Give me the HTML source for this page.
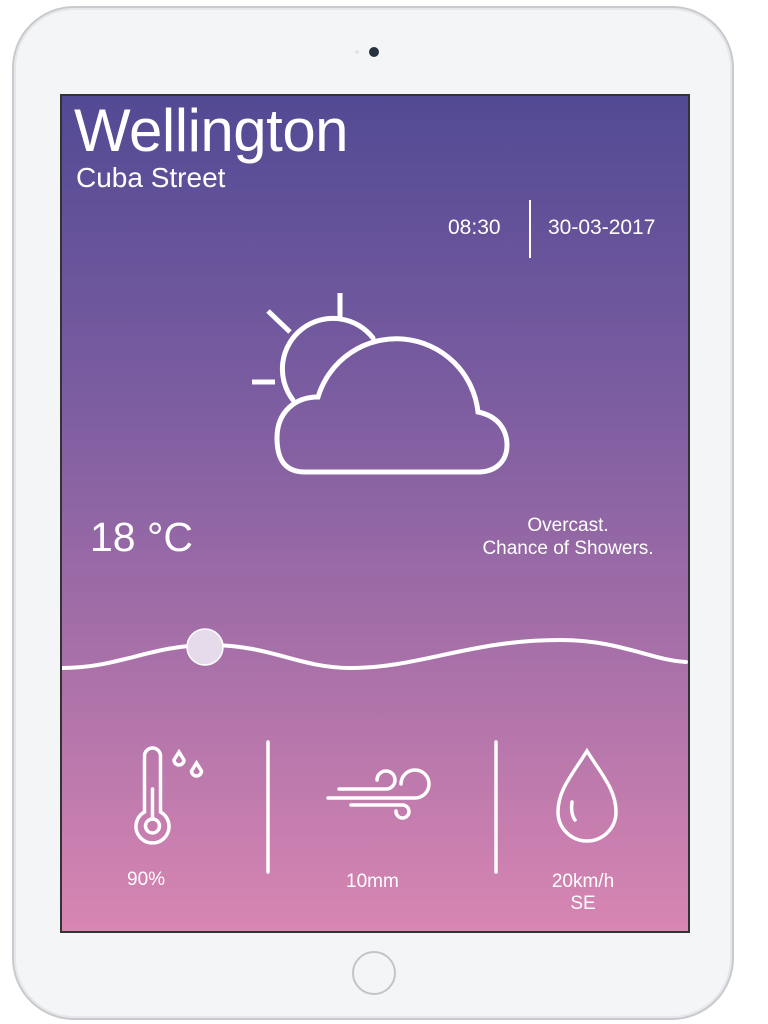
<!DOCTYPE html>
<html><head><style>
html,body{margin:0;padding:0;background:#fff;width:768px;height:1024px;overflow:hidden;font-family:"Liberation Sans",sans-serif;}
.dev{position:absolute;left:12px;top:6px;width:722px;height:1014px;border-radius:62px;background:#f4f5f7;border:2px solid #c9cacd;box-sizing:border-box;box-shadow:inset 0 0 0 2px #e6e7ea;}
.scr{position:absolute;left:60px;top:94px;width:630px;height:839px;background:linear-gradient(#524a94 0%,#7a5ca0 35%,#a56fa8 65%,#d886b2 100%);border:2px solid #333;box-sizing:border-box;color:#fff;overflow:hidden;}
.t{position:absolute;white-space:nowrap;}
</style></head><body>
<div class="dev"></div>
<div style="position:absolute;left:369px;top:47px;width:10px;height:10px;border-radius:50%;background:#2a3242;"></div>
<div style="position:absolute;left:355px;top:50px;width:4px;height:4px;border-radius:50%;background:#e2e3e6;"></div>
<div style="position:absolute;left:352px;top:951px;width:44px;height:44px;border-radius:50%;border:2px solid #c3c4c7;box-sizing:border-box;background:#f4f5f7;"></div>
<div class="scr">
<div class="t" style="left:12px;top:0px;font-size:60px;letter-spacing:-0.5px;">Wellington</div>
<div class="t" style="left:14px;top:66px;font-size:28px;">Cuba Street</div>
<div class="t" style="left:386px;top:120px;font-size:21px;">08:30</div>
<div style="position:absolute;left:467px;top:104px;width:2px;height:58px;background:#fff;"></div>
<div class="t" style="left:486px;top:120px;font-size:21px;">30-03-2017</div>
<div class="t" style="left:28px;top:418px;font-size:41px;">18 °C</div>
<div class="t" style="left:406px;top:418px;font-size:19px;text-align:center;line-height:23px;width:200px;">Overcast.<br>Chance of Showers.</div>
<svg style="position:absolute;left:-2px;top:-2px" width="630" height="839" viewBox="60 94 630 839" fill="none" stroke="#fff" stroke-linecap="round">
<g stroke-width="5">
<line x1="268" y1="311" x2="290" y2="332" stroke-linecap="butt"/><line x1="340" y1="293" x2="340" y2="317" stroke-linecap="butt"/><line x1="252" y1="382" x2="275" y2="382" stroke-linecap="butt"/>
<path d="M293 400 A45 45 0 0 1 373 338"/>
<path d="M305 472 C284 472 277 458 277 438 C277 412 295 397 318 397 A82 82 0 0 1 478 412 C498 416 507 430 507 445 C507 462 495 472 478 472 Z"/>
<path d="M62 668 C120 668 150 645 210 645 C270 645 300 668 350 668 C420 668 470 640 560 640 C620 640 650 660 686 662" stroke-width="4"/>
</g>
<circle cx="205" cy="647" r="18" fill="#e6dbea" stroke="#fff" stroke-width="1.5"/>
<g stroke-width="3.5">
<path d="M144.5 756 a8 8 0 0 1 16 0 v56 a16.5 16.5 0 1 1 -16 0 Z"/><circle cx="152.5" cy="826" r="7"/><line x1="152.5" y1="789" x2="152.5" y2="819"/>
<path d="M179 752 l-5 8 a5 5 0 1 0 10 0 Z"/><path d="M196.5 763 l-5 8 a5 5 0 1 0 10 0 Z"/>
<line x1="268" y1="742" x2="268" y2="872"/><line x1="496" y1="742" x2="496" y2="872"/>
<path d="M339 789 H386 A9 9 0 1 0 377 780"/>
<path d="M328 798 H415 A14 14 0 1 0 401 784"/>
<path d="M351 805 H403 A6.5 6.5 0 1 1 396 811"/>
<path d="M587 751 C572 775 558 790 558 812 a29 29 0 0 0 58 0 C616 790 602 775 587 751 Z"/><path d="M572 802 c-1 8 0 14 3 18"/>
</g>
</svg>
<div class="t" style="left:65px;top:773px;font-size:19px;">90%</div>
<div class="t" style="left:284px;top:775px;font-size:19px;">10mm</div>
<div class="t" style="left:481px;top:775px;font-size:19px;text-align:center;width:80px;line-height:22px;">20km/h<br>SE</div>
</div>
</body></html>
